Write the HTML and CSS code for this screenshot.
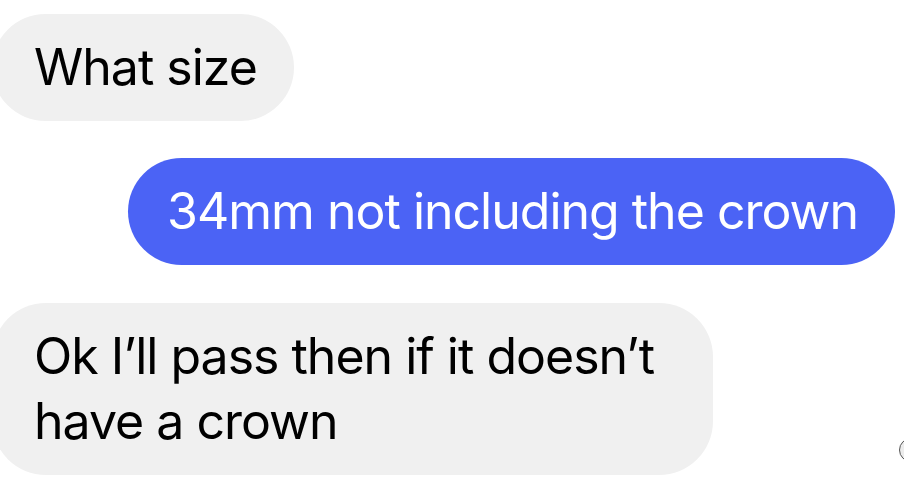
FILE: index.html
```
<!DOCTYPE html>
<html lang="en">
<head>
    <meta charset="UTF-8">
    <meta name="viewport" content="width=device-width, initial-scale=1.0">
    <title>Chat</title>
    <link rel="stylesheet" href="styles.css">
</head>
<body>

    <div class="thread">
        <div class="row incoming">
            <div class="bubble gray">What size</div>
        </div>

        <div class="row outgoing">
            <div class="bubble blue">34mm not including the crown</div>
        </div>

        <div class="row incoming last">
            <div class="bubble gray wide">Ok I’ll pass then if it doesn’t have a crown</div>
            <div class="seen"></div> <!-- аватар "прочитано" -->
        </div>
    </div>

</body>
</html>
```

FILE: styles.css
```
body {
    margin: 0;
    height: 100vh;
    overflow: hidden;
    background: white;
    font-family: Inter, "Liberation Sans", sans-serif;
}
.thread {
    display: flex;
    flex-direction: column;
    gap: 37px;
    padding-top: 14px;
}
.row {
    display: flex;
}
.row.incoming {
    justify-content: flex-start;
}
.row.outgoing {
    justify-content: flex-end;
    padding-right: 9px;
}
.row.last {
    justify-content: space-between;
    align-items: flex-end;
    margin-top: 1px;
}
.bubble {
    box-sizing: border-box;
    font-size: 50px;
    line-height: 65px;
    letter-spacing: -1px;
    padding: 21px 37px;
    border-radius: 54px;
}
.bubble.gray {
    background: #f0f0f0;
    color: black;
    margin-left: -8px;
    padding-left: 42px;
}
.bubble.wide {
    width: 721px;
    padding-right: 20px;
}
.bubble.blue {
    background: #4b63f5;
    color: white;
    padding-left: 39px;
}
.seen {
    width: 22px;
    height: 22px;
    border-radius: 50%;
    border: 1px solid #555;
    background: #ececec;
    margin-right: -19px;
    margin-bottom: 13px;
}
```
